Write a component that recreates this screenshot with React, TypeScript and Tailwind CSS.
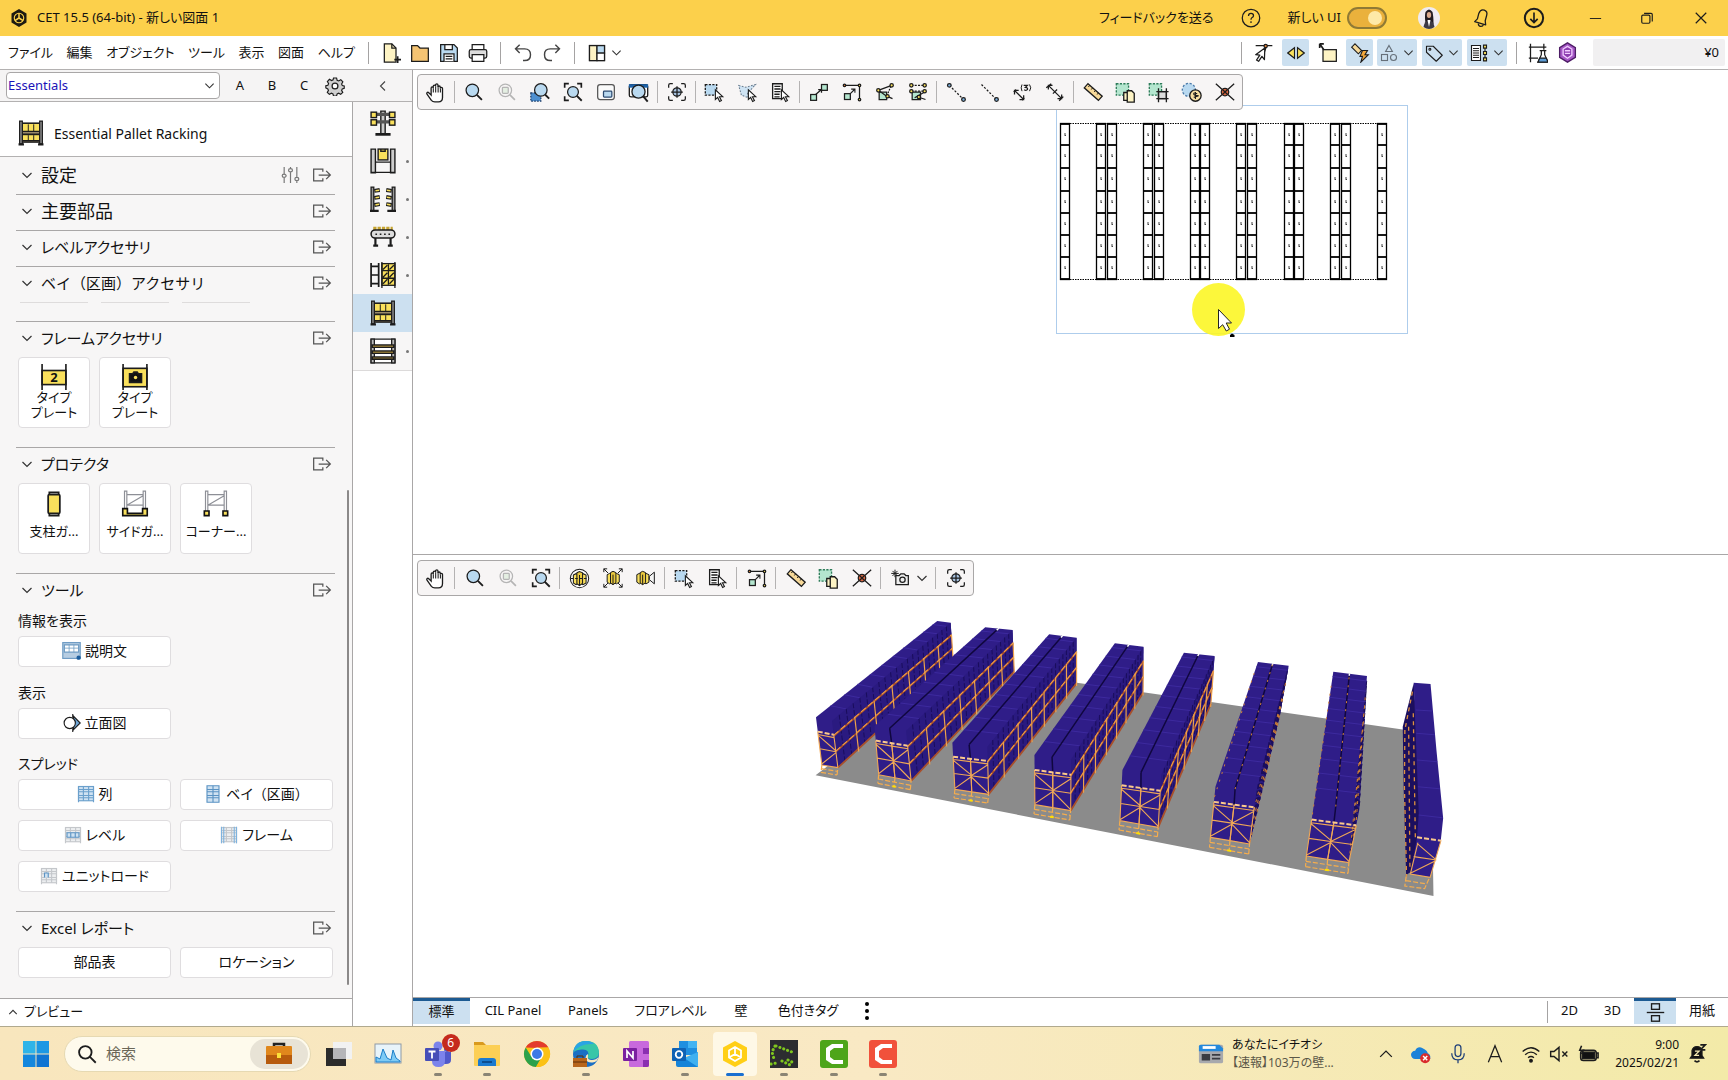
import React from "react";
import type { ReactNode } from "react";

type IconProps = { children: ReactNode; className?: string; sw?: number; color?: string };

function Ico({ children, className = "size-6", sw = 1.5, color = "#1c1c1c" }: IconProps) {
  return (
    <svg viewBox="0 0 24 24" className={`${className} shrink-0`} fill="none" stroke={color} strokeWidth={sw} aria-hidden="true">
      {children}
    </svg>
  );
}

const BLUE = "#b9d9f0";
const GREEN = "#b4e6cf";
const CREAM = "#fdf3c4";
const YELLOW = "#f9e05c";

/* ---------- small shared glyphs ---------- */

const Pointer = ({ x, y }: { x: number; y: number }) => (
  <path transform={`translate(${x} ${y})`} d="M0 0v11l2.600-2.400 2.300 4.600 2-1-2.300-4.400h3.800z" fill="#fff" strokeWidth={1.3} />
);

const Chevron = ({ className = "size-3" }: { className?: string }) => (
  <Ico className={className} sw={2.4} color="#333">
    <path d="M3 8l9 9 9-9" />
  </Ico>
);

/* ---------- top bars ---------- */

const CetLogo = () => (
  <svg viewBox="0 0 24 24" className="size-[18px]" aria-hidden="true">
    <path d="M12 0l10 6v12l-10 6L2 18V6z" fill="#1d1a12" />
    <circle cx="12" cy="12" r="6.3" fill="none" stroke="#fbd04a" strokeWidth="1.5" />
    <path d="M12 5.5V12l-5.5 3.5M12 12l5.500 3.500" stroke="#fbd04a" strokeWidth="2" fill="none" />
  </svg>
);

const Hand = () => (
  <Ico className="size-[21px]" sw={1.5}>
    <path d="M7 15L4.300 12.300c-1.300-1.300-3 .2-2 1.700l5 7c1 1.300 2 1.800 4 1.800h4c3 0 4.700-2 4.700-5V7.500c0-1.800-2.500-1.800-2.500 0V6c0-1.900-2.700-1.900-2.700 0V3.500c0-1.900-2.700-1.900-2.700 0V5c0-1.900-2.700-1.900-2.700 0v2c0-1.800-2.400-1.800-2.400 0z" fill="#fff" />
    <path d="M9.500 7v5M12.200 5v7M15 6v6M17.600 7.500V12" strokeWidth="1.200" />
  </Ico>
);
const Zoom = () => (
  <Ico className="size-5">
    <circle cx="10" cy="10" r="7.500" fill={BLUE} />
    <path d="M15.500 15.500l6 6" strokeWidth="2.200" />
  </Ico>
);
const ZoomOff = () => (
  <Ico className="size-5" color="#b5b5b5">
    <circle cx="10" cy="10" r="7.500" />
    <rect x="6.500" y="6.500" width="7" height="7" rx="1" fill="#e4efe2" />
    <path d="M15.500 15.500l6 6" strokeWidth="2" />
  </Ico>
);
const ZoomSel = () => (
  <Ico className="size-5">
    <rect x="1" y="13" width="12" height="10" fill="#4d8fd0" stroke="#1f3f6a" strokeDasharray="2 1.500" />
    <circle cx="13" cy="9.500" r="7.500" fill={BLUE} />
    <path d="M18 15l5 5" strokeWidth="2.200" />
  </Ico>
);
const ZoomFit = () => (
  <Ico className="size-5">
    <path d="M2 7V2h5M17 2h5v5M2 17v5h5" strokeWidth="2" />
    <circle cx="12" cy="12" r="6.500" fill={BLUE} />
    <path d="M16.500 16.500l6 6" strokeWidth="2.200" />
  </Ico>
);
const ZoomBox = () => (
  <Ico className="size-5" color="#555">
    <rect x="2" y="3" width="20" height="18" rx="3" fill="#fafafa" />
    <rect x="9" y="11" width="10" height="7" rx="1" fill={BLUE} stroke="#2b4a70" />
  </Ico>
);
const ZoomWin = () => (
  <Ico className="size-[21px]">
    <rect x="1.500" y="3" width="21" height="14" rx="2" fill="#fff" />
    <path d="M1 4.500h22" stroke="#1d62a8" strokeWidth="4" />
    <circle cx="12" cy="11" r="7.500" fill={BLUE} />
    <path d="M17.500 16.500l5 6" strokeWidth="2.200" />
  </Ico>
);
const Target = () => (
  <Ico className="size-5">
    <path d="M2 7V4q0-2 2-2h3M17 2h3q2 0 2 2v3M2 17v3q0 2 2 2h3M17 22h3q2 0 2-2v-3" />
    <circle cx="12" cy="12" r="5" fill="#a9c4e2" />
    <path d="M12 5v14M5 12h14" />
  </Ico>
);
const SelBox = () => (
  <Ico className="size-[21px]">
    <rect x="1.500" y="3" width="13" height="12" fill={BLUE} strokeDasharray="2.500 1.500" />
    <Pointer x={13} y={9} />
  </Ico>
);
const SelPoly = () => (
  <Ico className="size-[21px]">
    <path d="M2 4l8 2 11-3-9 10 1 5-8-3z" fill="#cfe4f4" stroke="#6a7d90" strokeDasharray="2 1.600" strokeWidth="1.200" />
    <Pointer x={13} y={9} />
  </Ico>
);
const SelList = () => (
  <Ico className="size-[21px]">
    <path d="M3 2h11v17H3z" fill="#fff" />
    <path d="M5 5h7M5 8h7M5 11h7M5 14h6M5 17h6" />
    <Pointer x={13} y={9} />
  </Ico>
);
const Link1 = () => (
  <Ico className="size-5">
    <rect x="2" y="15" width="7" height="7" fill={GREEN} />
    <rect x="15" y="3" width="7" height="7" fill={GREEN} />
    <path d="M8 15l7-6M11 9h4v4" />
  </Ico>
);
const Link2 = () => (
  <Ico className="size-5">
    <path d="M3 4h18v17" />
    <rect x="3" y="14" width="7" height="7" fill={GREEN} />
    <path d="M10 14l5-5M11 8.500h4.500V13" strokeWidth="1.300" />
    <circle cx="3" cy="4" r="1.500" fill="#e8853a" />
    <circle cx="21" cy="4" r="1.500" fill={YELLOW} />
    <circle cx="21" cy="21" r="1.500" fill={YELLOW} />
  </Ico>
);
const Snap1 = () => (
  <Ico className="size-5">
    <path d="M5 12h9v9H5z" fill={GREEN} />
    <path d="M4 10l16-6M4 10l10 7 7 3" />
    <path d="M19 5l-4 10" strokeDasharray="2 1.500" />
    <circle cx="4" cy="10" r="2" fill={YELLOW} />
    <circle cx="20" cy="4" r="2" fill={YELLOW} />
    <circle cx="15" cy="17" r="2" fill={YELLOW} />
  </Ico>
);
const Snap2 = () => (
  <Ico className="size-5">
    <path d="M5 12h10v9H5z" fill={GREEN} />
    <path d="M4 4h16M4 11h16" strokeDasharray="2.500 1.500" />
    <path d="M8 19L20 12M12 18l9 3" />
    {[[4, 4], [20, 4], [4, 11], [20, 11], [13, 18]].map(([x, y]) => (
      <circle key={`${x}-${y}`} cx={x} cy={y} r="2" fill={YELLOW} />
    ))}
  </Ico>
);
const Line2 = () => (
  <Ico className="size-5">
    <path d="M4 4l17 17" strokeDasharray="2.500 2" />
    <circle cx="4" cy="4" r="2.200" fill="#7fb0dd" />
    <circle cx="21" cy="21" r="2.200" fill="#7fb0dd" />
  </Ico>
);
const Line1 = () => (
  <Ico className="size-5">
    <path d="M3 3l18 18" strokeDasharray="2.500 2" />
    <circle cx="21" cy="21" r="2.200" fill="#7fb0dd" />
  </Ico>
);
const Dim3 = () => (
  <Ico className="size-5">
    <path d="M3 10l11 11M3 15v-5h5M14 16v5H9M2 12l3-3M12 22l3-3" />
    <path d="M12 3q-2 4 0 8M21 3q3 4 0 8" strokeWidth="1.200" />
    <path d="M14 4h4.500l-2.500 2.500q3.500.3 2.500 2.700-1.500 1.500-4 0" strokeWidth="1.500" />
  </Ico>
);
const Dim = () => (
  <Ico className="size-5">
    <path d="M4 4l16 16M4 9V4h5M20 15v5h-5M1.500 7l6-5M17 22.500l5-5M9.500 14l5-5" />
  </Ico>
);
const Ruler = () => (
  <Ico className="size-5">
    <path d="M6 2l17 15-4.500 5L1.500 7z" fill="#f7d999" />
    <path d="M8 4L6.500 6M11.500 7L10 9M15 10l-1.500 2M18.500 13L17 15" strokeWidth="1.200" />
  </Ico>
);
const CopySel = () => (
  <Ico className="size-[21px]">
    <rect x="1.500" y="2" width="14" height="13" fill={GREEN} stroke="#2f7d5b" strokeDasharray="2.500 1.500" />
    <path d="M10 12h6v9h-6z" fill={CREAM} />
    <path d="M14 10h5l3 3v10h-8z" fill={CREAM} />
  </Ico>
);
const FrameSel = () => (
  <Ico className="size-[21px]">
    <rect x="1.500" y="2" width="14" height="13" fill={GREEN} stroke="#2f7d5b" strokeDasharray="2.500 1.500" />
    <rect x="12" y="11" width="9" height="8" fill="#dcdcdc" />
    <path d="M12 7v16M21 7v16M9.500 11h14M9.500 19h14" />
  </Ico>
);
const Price = () => (
  <Ico className="size-[21px]">
    <circle cx="9" cy="9" r="7.500" fill={BLUE} stroke="#4a79a8" strokeDasharray="2.500 2" />
    <circle cx="16.500" cy="15.500" r="6.500" fill="#f7dfa2" />
    <path d="M18.500 13.500q-4-2-4 0t4 2-4 2M16.500 11.500v8" strokeWidth="1.200" />
  </Ico>
);
const Cross = () => (
  <Ico className="size-5">
    <path d="M1 2l22 20M23 2L1 22" />
    <circle cx="12" cy="12" r="4.500" fill="#d9663f" />
    <path d="M9 9l6 6M15 9l-6 6" />
  </Ico>
);
const Cubes = () => (
  <>
    <path d="M5 8l3-1.500L12 8v9l-4 2-3-2z" fill={YELLOW} />
    <path d="M12 8l4-1.500L19.500 8v9L16 19l-4-2z" fill={YELLOW} />
    <path d="M9 5.500l3-1.500 3.500 1.500v12L12 20l-3-2z" fill="#e9c93f" />
    <path d="M12 8v12" />
  </>
);
const Orbit = () => (
  <Ico className="size-[21px]" sw={1.200}>
    <circle cx="12" cy="12" r="10.500" fill="#fff" />
    <Cubes />
    <path d="M2 12h20" strokeDasharray="3 2" />
  </Ico>
);
const FitCube = () => (
  <Ico className="size-5" sw={1.200}>
    <Cubes />
    <path d="M1 5V1h4M1 1l5 5M19 1h4v4M23 1l-5 5M1 19v4h4M1 23l5-5M19 23h4v-4M23 23l-5-5" />
  </Ico>
);
const CamCube = () => (
  <Ico className="size-5" sw={1.200}>
    <g transform="translate(-4 0)">
      <Cubes />
    </g>
    <path d="M16 10l6-5v14l-6-5z" fill="#f4f4f4" />
  </Ico>
);
const Camera = () => (
  <Ico className="size-5">
    <path d="M7 9h4l2-2h4l2 2h3v11H7z" fill="#eee" />
    <circle cx="15" cy="14" r="3.200" />
    <path d="M6 2v9M1.500 6.500h9M3 3.500l6 6M9 3.500l-6 6" strokeWidth="1.200" />
  </Ico>
);

type Tool = { name: string; icon: ReactNode; menu?: boolean } | null;

const planTools: Tool[] = [
  { name: "Pan", icon: <Hand /> }, null,
  { name: "Zoom", icon: <Zoom /> }, { name: "Zoom actual", icon: <ZoomOff /> }, { name: "Zoom selection", icon: <ZoomSel /> },
  { name: "Zoom extents", icon: <ZoomFit /> }, { name: "Zoom page", icon: <ZoomBox /> }, { name: "Zoom window", icon: <ZoomWin /> }, null,
  { name: "Center", icon: <Target /> }, null,
  { name: "Select box", icon: <SelBox /> }, { name: "Select polygon", icon: <SelPoly /> }, { name: "Select list", icon: <SelList /> }, null,
  { name: "Connect", icon: <Link1 /> }, { name: "Connect corner", icon: <Link2 /> }, { name: "Snap angle", icon: <Snap1 /> }, { name: "Snap parallel", icon: <Snap2 /> }, null,
  { name: "Two point line", icon: <Line2 /> }, { name: "One point line", icon: <Line1 /> }, { name: "Repeat dimension", icon: <Dim3 /> }, { name: "Dimension", icon: <Dim /> }, null,
  { name: "Measure", icon: <Ruler /> }, { name: "Copy area", icon: <CopySel /> }, { name: "Frame area", icon: <FrameSel /> }, { name: "Price area", icon: <Price /> }, { name: "Explode", icon: <Cross /> },
];

const viewTools: Tool[] = [
  { name: "Pan 3D", icon: <Hand /> }, null,
  { name: "Zoom 3D", icon: <Zoom /> }, { name: "Zoom actual 3D", icon: <ZoomOff /> }, { name: "Zoom extents 3D", icon: <ZoomFit /> }, null,
  { name: "Orbit", icon: <Orbit /> }, { name: "Fit model", icon: <FitCube /> }, { name: "Camera view", icon: <CamCube /> }, null,
  { name: "Select box 3D", icon: <SelBox /> }, { name: "Select list 3D", icon: <SelList /> }, null,
  { name: "Connect corner 3D", icon: <Link2 /> }, null,
  { name: "Measure 3D", icon: <Ruler /> }, { name: "Copy area 3D", icon: <CopySel /> }, { name: "Explode 3D", icon: <Cross /> }, null,
  { name: "Snapshot", icon: <Camera />, menu: true }, null,
  { name: "Center 3D", icon: <Target /> },
];

function Toolbar({ tools, loose }: { tools: Tool[]; loose?: boolean }) {
  return (
    <div role="toolbar" className="relative z-10 flex h-9 w-fit items-center rounded-sm border border-[#a9a7a7] bg-[#f7f5f5] px-px">
      {tools.map((t, i) =>
        t ? (
          <button key={i} aria-label={t.name} className={`flex h-8 items-center justify-center ${t.menu ? "w-[49px] gap-[6px]" : "w-[33px]"}`}>
            {t.icon}
            {t.menu && <Chevron />}
          </button>
        ) : (
          <span key={i} className={`h-[22px] w-px bg-[#b4b2b2] ${loose ? "mr-[3px] ml-[2px]" : "mx-[2px]"}`} />
        ),
      )}
    </div>
  );
}

function Sep({ className = "" }: { className?: string }) {
  return <span className={`h-[22px] w-px shrink-0 bg-[#a5a3a3] ${className}`} />;
}

function TitleBar() {
  return (
    <header className="flex h-9 shrink-0 items-center bg-[#fcd04b] pl-[10px]">
      <CetLogo />
      <h1 className="ml-[9px] flex-1 text-[13px]">CET 15.5 (64-bit) - 新しい図面 1</h1>
      <button className="text-[13px]">フィードバックを送る</button>
      <button aria-label="Help" className="ml-7">
        <Ico className="size-5"><circle cx="12" cy="12" r="10.500" /><path d="M9 9.500q0-3 3-3t3 2.700q0 1.500-2 2.500-1 .6-1 2.300M12 16v2" /></Ico>
      </button>
      <label className="ml-[26px] flex items-center gap-[6px] text-[13px]">
        新しい UI
        <input type="checkbox" defaultChecked role="switch" className="peer sr-only" />
        <span className="flex h-[22px] w-10 items-center justify-end rounded-full border-2 border-[#8f7a35] bg-[#eab13c] px-[3px]">
          <span className="size-[14px] rounded-full bg-[#fee9a8]" />
        </span>
      </label>
      <button aria-label="Account" className="ml-[31px]">
        <svg viewBox="0 0 22 22" className="size-[22px]">
          <circle cx="11" cy="11" r="11" fill="#efebf2" />
          <path d="M7.500 17q-1-9 0-12Q11 0 14.500 5q1 4 1 12z" fill="#221b22" />
          <ellipse cx="11" cy="8" rx="2.200" ry="3" fill="#dba98e" />
          <path d="M5.500 20q1-6.500 5.500-6.500t5.500 6.500q-5.500 4-11 0z" fill="#3d3a46" />
          <path d="M9.500 13h3l-1.500 7z" fill="#fff" />
        </svg>
      </button>
      <button aria-label="Notifications" className="ml-[31px]">
        <Ico className="size-[22px]" sw={1.400}><path d="M4 16l3-3 1.500-6q2-5 6-3.500t2.500 6l-1.500 5.500.500 4.500z" strokeLinejoin="round" /><path d="M8 18q0 3 2.500 3.200t3-2" /></Ico>
      </button>
      <button aria-label="Updates" className="ml-[30px]">
        <Ico className="size-[22px]" sw={2.200}><circle cx="12" cy="12" r="10" /><path d="M12 6v11M8 13l4 4 4-4" strokeWidth="1.800" /></Ico>
      </button>
      <button aria-label="Minimize" className="ml-[24px] flex w-[52px] justify-center"><Ico className="size-[15px]"><path d="M3 12h18" /></Ico></button>
      <button aria-label="Restore" className="flex w-[52px] justify-center"><Ico className="size-[14px]" sw={2}><rect x="3" y="7" width="14" height="14" rx="2" /><path d="M7 4h12q2 0 2 2v12" /></Ico></button>
      <button aria-label="Close" className="flex w-[55px] justify-center"><Ico className="size-[14px]" sw={2}><path d="M3 3l18 18M21 3L3 21" /></Ico></button>
    </header>
  );
}

function MenuBar() {
  return (
    <div className="flex h-[34px] shrink-0 items-center border-b border-[#b3b1b1] bg-white pr-[3px]">
      <nav className="flex w-[368px] shrink-0 justify-between pr-[13px] pl-2 text-[13px] whitespace-nowrap">
        {["ファイル", "編集", "オブジェクト", "ツール", "表示", "図面", "ヘルプ"].map((m) => (
          <button key={m}>{m}</button>
        ))}
      </nav>
      <Sep />
      <div className="flex items-center gap-[9px] pl-3">
        <button aria-label="New"><Ico className="size-5"><path d="M4 1h9l5 5v17H4z" fill={CREAM} /><path d="M13 1v5h5" /><path d="M20 16v8M16 20h8" strokeWidth="2" /></Ico></button>
        <button aria-label="Open"><Ico className="size-5"><path d="M2 3h7l3 3h10v16H2z" fill="#f5c473" /></Ico></button>
        <button aria-label="Save"><Ico className="size-5"><path d="M2 2h16l4 4v16H2z" fill={BLUE} /><path d="M7 2h9v6H7zM6 22v-9h12v9" fill="#fff" /><path d="M8 16h8M8 19h8" /></Ico></button>
        <button aria-label="Print"><Ico className="size-5"><path d="M5 8V2h14v6" fill="#fff" /><rect x="1.500" y="8" width="21" height="10" rx="2" fill="#ddd" /><path d="M5 14h14v8H5z" fill="#fff" /></Ico></button>
      </div>
      <Sep className="ml-3" />
      <div className="flex items-center gap-[9px] pl-3">
        <button aria-label="Undo"><Ico className="size-5" sw={1.700} color="#444"><path d="M8 2L3 7l5 5M3 7h11q7 0 7 7t-7 7h-2" /></Ico></button>
        <button aria-label="Redo"><Ico className="size-5" sw={1.700} color="#444"><path d="M16 2l5 5-5 5M21 7H10q-7 0-7 7t7 7h2" /></Ico></button>
      </div>
      <Sep className="ml-3" />
      <button aria-label="Window layout" className="ml-3 flex items-center gap-1">
        <Ico className="size-5"><rect x="3" y="3" width="18" height="18" fill="#fff" /><path d="M3 3h9v18H3z" fill={CREAM} /><path d="M12 3h9v9h-9z" fill={BLUE} /><path d="M12 12h9v9h-9z" fill="#fff" /></Ico>
        <Chevron className="size-[11px]" />
      </button>
      <div className="ml-auto flex items-center">
        <Sep />
        <button aria-label="Snap pointer" className="ml-[10px] flex w-6 justify-center"><Ico className="size-5"><path d="M2 3h20M15 4l-3 8" /><circle cx="14" cy="3.500" r="2" fill="#e8853a" /><path d="M13 6L2 14l5 .5-4 6 2.500 1.500 4-6 3 4z" fill="#fff" strokeLinejoin="round" /></Ico></button>
        <button aria-label="Mirror" className="ml-[6px] flex h-[27px] w-[27px] items-center justify-center rounded-xs bg-[#cce0f0]"><Ico className="size-[18px]"><path d="M10 5v14L1 12zM14 5v14l9-7z" fill={YELLOW} /></Ico></button>
        <button aria-label="Move" className="flex w-[37px] justify-center"><Ico className="size-5"><rect x="6" y="8" width="16" height="14" fill={CREAM} /><path d="M2 1h5M2 1v5M2 1l5 7" strokeWidth="2" /></Ico></button>
        <button aria-label="Quick dimension" className="flex h-[27px] w-[27px] items-center justify-center rounded-xs bg-[#cce0f0]"><Ico className="size-5" sw={1.300}><path d="M6 1l8 8-4 4-8-8z" fill="#f7d999" /><path d="M15 9h6l-3 5h4l-9 9 2-7h-3z" fill="#f3a83c" /></Ico></button>
        <button aria-label="Shapes" className="ml-1 flex h-[27px] w-10 items-center justify-center gap-[5px] rounded-xs bg-[#cce0f0]"><Ico className="size-[18px]" color="#66707a"><path d="M12 2l4.500 8h-9z" /><rect x="2" y="14" width="8" height="8" /><circle cx="18" cy="18" r="4" /></Ico><Chevron className="size-[11px]" /></button>
        <button aria-label="Tags" className="ml-[5px] flex h-[27px] w-10 items-center justify-center gap-[5px] rounded-xs bg-[#cce0f0]"><Ico className="size-[18px]"><path d="M2 3h9l12 12-8 8L2 11z" strokeLinejoin="round" /><circle cx="6.500" cy="7" r="1.300" /></Ico><Chevron className="size-[11px]" /></button>
        <button aria-label="Properties" className="ml-[5px] flex h-[27px] w-10 items-center justify-center gap-[5px] rounded-xs bg-[#cce0f0]"><Ico className="size-[18px]"><path d="M2 2h12v20H2z" fill="#fff" /><path d="M4 6h8M4 9h8M4 12h8M4 15h8M4 18h8" /><path d="M20 3v18" /><path d="M18 1.500h4v4h-4zM18 10h4v4h-4zM18 18.500h4v4h-4z" fill={YELLOW} /></Ico><Chevron className="size-[11px]" /></button>
        <Sep className="ml-[9px]" />
        <button aria-label="Lab" className="ml-[11px]"><Ico className="size-5"><path d="M3 1v22M1 5h21M1 18h11M19 1v7" /><path d="M14 9h8M16 9v5l-4 9h12l-4-9V9" fill="#fff" /><path d="M14 18h8l2 5H12z" fill="#5b9bd5" /></Ico></button>
        <button aria-label="Extensions" className="ml-[9px]"><Ico className="size-[21px]"><path d="M12 1l9 5.500v11L12 23l-9-5.500v-11z" fill="#a557c5" stroke="#4d1c66" /><path d="M12 5l5 3v7l-5 3.500L7 15V8z" stroke="#f1ceff" fill="#8d3db0" /><path d="M9 10h6M9 13h6" stroke="#f1ceff" /></Ico></button>
        <output className="ml-[15px] flex h-[27px] w-[132px] items-center justify-end rounded-xs bg-[#f1f0f1] pr-[6px] text-[13px]">¥0</output>
      </div>
    </div>
  );
}

/* ---------- catalogue rail ---------- */

const PalletRack = ({ className = "size-[26px]" }: { className?: string }) => (
  <Ico className={className} sw={1.100}>
    <rect x="4" y="3" width="16" height="8" fill={YELLOW} />
    <rect x="4" y="13.500" width="16" height="6.500" fill={YELLOW} />
    <path d="M9.500 4v7M14.500 4v7M9.500 14v6M14.500 14v6" strokeWidth="0.900" />
    <path d="M4 3h16" />
    <path d="M4 10.500h16v2.500H4zM4 19h16v1.500H4z" fill="#9a8a6a" />
    <path d="M1.500 1H4v21H1.500zM20 1h2.500v21H20z" fill="#8a8a8a" />
    <path d="M.5 22.500h5M18.500 22.500h5" strokeWidth="2" />
  </Ico>
);

const railIcons: { name: string; dot?: boolean; active?: boolean; icon: ReactNode }[] = [
  { name: "Cantilever", icon: <Ico className="size-[26px]" sw={1.300}><path d="M10 1h4v21h-4z" fill="#ccc" /><path d="M3 4h18M3 11h18" strokeWidth="3" stroke="#555" />{[[1, 2], [18, 2], [1, 9], [18, 9]].map(([x, y]) => <rect key={`${x}${y}`} x={x} y={y} width="5" height="5" fill={YELLOW} />)}<path d="M5 22.500h14" strokeWidth="2.500" /></Ico> },
  { name: "Drive-in", dot: true, icon: <Ico className="size-[26px]" sw={1.300}><path d="M1 1h4v22H1zM19 1h4v22h-4z" fill="#ccc" /><rect x="7.500" y="1" width="9" height="10" fill={YELLOW} /><path d="M10 1v2h4V1M5 13h14M1 22.500h22" /></Ico> },
  { name: "Shelf arms", dot: true, icon: <Ico className="size-[26px]" sw={1.200}><path d="M1 1h2.500v22H1zM20.500 1H23v22h-2.500z" fill="#999" /><path d="M4 4.500l5-.8M4 11l5-.8M4 17.500l5-.8M20 4.500l-5-.8M20 11l-5-.8M20 17.500l-5-.8" strokeWidth="3.600" /><path d="M5 4.400l3.400-.5M5 10.900l3.400-.5M5 17.400l3.400-.5M19 4.400l-3.400-.5M19 10.900l-3.400-.5M19 17.400l-3.400-.5" stroke={YELLOW} strokeWidth="1.500" /><path d="M0 23h8M16 23h8" strokeWidth="2" /></Ico> },
  { name: "Conveyor", dot: true, icon: <Ico className="size-[26px]" sw={1.400}><path d="M3 4h18" stroke="#c7a531" strokeWidth="3" strokeDasharray="3 1" /><rect x="1" y="5.500" width="22" height="7.500" rx="3.700" fill="#ddd" /><path d="M5 9.500h15" strokeWidth="1.500" strokeDasharray="1.500 2.500" /><path d="M5 13v6M19 13v6M3 20h4.500M16.500 20H21" strokeWidth="2" /></Ico> },
  { name: "Shuttle", dot: true, icon: <Ico className="size-[26px]" sw={1.200}><path d="M1 1v22M8 1v22M1 4h7M1 12h7M1 20h7" strokeWidth="1.600" /><rect x="11" y="1.500" width="12" height="20" fill={YELLOW} /><path d="M11 0v24M17 2v19M23 0v24M11 8h12M11 15h12M12 7l4-4M18 7l4-4M12 14l4-4M18 14l4-4M12 20l4-4M18 20l4-4" /></Ico> },
  { name: "Pallet racking", active: true, icon: <PalletRack /> },
  { name: "Shelving", dot: true, icon: <Ico className="size-[26px]" sw={1.200}><path d="M1 1h22v22H1z" fill="#fff" /><path d="M1 1h3v22H1zM20 1h3v22h-3z" fill="#bbb" /><path d="M2 6.500h20v2H2zM2 12h20v2H2zM2 17.500h20v2H2z" fill="#f3c64b" strokeWidth="1.400" /></Ico> },
];

function Rail() {
  return (
    <div className="w-[60px] shrink-0 border-l border-[#a9a7a7] bg-white">
      <div className="border-b border-[#dcdada] bg-[#f7f6f6] pt-[2px]">
        {railIcons.map((r) => (
          <button key={r.name} aria-label={r.name} className={`relative flex h-[38px] w-full items-center justify-center ${r.active ? "bg-[#cce0f0]" : ""}`}>
            {r.icon}
            {r.dot && <span className="absolute top-[18px] right-[3px] size-[3px] rounded-full bg-[#777]" />}
          </button>
        ))}
      </div>
    </div>
  );
}

/* ---------- side panel ---------- */

const Export = () => (
  <Ico className="size-5" sw={1.500} color="#555">
    <path d="M13 8V5H2v14h11v-3M8 12h14M17 7l5 5-5 5" />
  </Ico>
);

const FullWidth = ({ children }: { children: ReactNode }) => <span className="[font-feature-settings:normal]">{children}</span>;

function Section({ title, label, extra, big, first, children }: { title: string; label?: ReactNode; extra?: ReactNode; big?: boolean; first?: boolean; children?: ReactNode }) {
  return (
    <section className={first ? "" : "border-t border-[#a9a7a7]"}>
      <div className="flex h-[35px] items-center pr-[3px] pb-[3px] pl-[5px]">
        <button className="flex flex-1 items-center gap-2">
          <Chevron />
          <h2 className={`leading-6 ${big ? "text-[18px]" : "text-[15px]"}`}>{label ?? title}</h2>
        </button>
        {extra}
        <button aria-label={`${title} を開く`}><Export /></button>
      </div>
      {children}
    </section>
  );
}

function Card({ icon, label }: { icon: ReactNode; label: ReactNode }) {
  return (
    <button className="flex h-[71px] w-[72px] flex-col items-center rounded-sm border border-[#dfdddf] bg-white pt-[6px] text-[13px] leading-[15px]">
      {icon}
      {label}
    </button>
  );
}

function Wide({ icon, label }: { icon?: ReactNode; label: ReactNode }) {
  return (
    <button className="flex h-[31px] w-[153px] items-center justify-center gap-1 rounded-sm border border-[#dfdddf] bg-white pb-[2px] text-[14px]">
      {icon}
      <span>{label}</span>
    </button>
  );
}

const GroupLabel = ({ children }: { children: ReactNode }) => (
  <h3 className="flex h-[27px] items-center pb-1 text-[14px]">{children}</h3>
);

function MiniRack({ faded, mark }: { faded?: boolean; mark?: ReactNode }) {
  const c = faded ? "#c4c7cb" : "#6ba0cc";
  return (
    <Ico className="size-[18px]" sw={1.500} color={c}>
      <rect x="2" y="2" width="20" height="19" fill={faded ? "#eceef0" : "#cfe2f2"} />
      <path d="M2 2v21M22 2v21M8.500 2v19M15.500 2v19M2 6h20M2 9h20M2 14h20M2 17h20" />
      {mark}
    </Ico>
  );
}

const Truss = ({ guard }: { guard: boolean }) => (
  <Ico className="size-7" sw={1}>
    <path d="M3 1h2v18H3zM19 1h2v18h-2zM5 4h14M5 13h14M5 13L19 5" stroke="#8d8f96" />
    {guard ? (
      <path d="M1.500 16h4v4h13v-4h4v6h-21z" fill={YELLOW} stroke="#111" strokeWidth="1.400" />
    ) : (
      <path d="M2 18h4v4H2zM18 18h4v4h-4z" fill={YELLOW} stroke="#111" strokeWidth="1.400" />
    )}
  </Ico>
);

function Panel() {
  return (
    <div className="flex min-w-0 flex-1 flex-col">
      <div className="flex h-[55px] shrink-0 items-center gap-[10px] border-b border-[#b3b1b1] bg-white pt-2 pl-[18px]">
        <PalletRack />
        <h2 className="text-[14px]">Essential Pallet Racking</h2>
      </div>
      <div className="flex min-h-0 flex-1 overflow-hidden border-b border-[#a9a7a7] bg-[#f7f6f6]">
        <div className="w-[335px] pl-4">
          <div className="pt-[2px]">
            <Section title="設定" big first extra={<button aria-label="設定を調整" className="mr-3"><Ico className="h-5 w-[19px]" color="#777"><path d="M4 2v9M4 15v7M12 2v2M12 8v14M20 2v13M20 19v3M17.500 17a2.500 2 0 1 0 5 0 2.500 2 0 1 0-5 0M1.500 13a2.500 2 0 1 0 5 0 2.500 2 0 1 0-5 0M9.500 6a2.500 2 0 1 0 5 0 2.500 2 0 1 0-5 0" /></Ico></button>} />
          </div>
          <Section title="主要部品" big />
          <Section title="レベルアクセサリ" />
          <Section title="ベイ（区画）アクセサリ" label={<FullWidth>ベイ（区画）アクセサリ</FullWidth>}>
            <div className="flex h-[19px] gap-[13px] pl-1">
              {[0, 1, 2].map((i) => <span key={i} className="h-px w-[68px] bg-[#dedcdc]" />)}
            </div>
          </Section>
          <Section title="フレームアクセサリ">
            <div className="flex gap-[9px] pb-[19px] pl-[2px]">
              <Card label={<span>タイプ<br />プレート</span>} icon={<Ico className="size-[26px]"><rect x="1" y="6" width="22" height="13" fill={YELLOW} /><path d="M1 0v24M23 0v24" /><text x="12" y="17" textAnchor="middle" fontSize="12" fontWeight="700" fill="#111" stroke="none">2</text></Ico>} />
              <Card label={<span>タイプ<br />プレート</span>} icon={<Ico className="size-[26px]"><rect x="1" y="4" width="22" height="17" fill={YELLOW} /><path d="M1 0v24M23 0v24" /><path d="M7 9h3l1-1.500h3L15 9h3v8H7z" fill="#111" /><circle cx="12.500" cy="12.500" r="1.600" fill={YELLOW} stroke="none" /></Ico>} />
            </div>
          </Section>
          <Section title="プロテクタ">
            <div className="flex gap-[9px] pb-[19px] pl-[2px]">
              <Card label="支柱ガ..." icon={<Ico className="mb-[6px] size-7"><path d="M8 2h8v20H8z" fill="#ccc" /><rect x="7" y="4" width="10" height="16" rx="1" fill={YELLOW} /></Ico>} />
              <Card label="サイドガ..." icon={<span className="mb-[6px]"><Truss guard /></span>} />
              <Card label="コーナー..." icon={<span className="mb-[6px]"><Truss guard={false} /></span>} />
            </div>
          </Section>
          <Section title="ツール">
            <div className="pb-[19px] pl-[2px]">
              <GroupLabel>情報を表示</GroupLabel>
              <Wide label="説明文" icon={<Ico className="size-[19px]" color="#6f9cc4"><rect x="1" y="2" width="22" height="20" fill="#b6cde2" /><path d="M3 5h18v9H3z" fill="#fff" /><path d="M9 5v9M15 5v9M3 9h18" strokeWidth="1" /><circle cx="21" cy="21" r="2" fill="#1b5c9c" stroke="#1b5c9c" /></Ico>} />
              <div className="h-[14px]" />
              <GroupLabel>表示</GroupLabel>
              <Wide label="立面図" icon={<Ico className="size-[18px]"><path d="M14 3l9 9-9 9z" fill="#6ea5d6" /><circle cx="9" cy="12" r="7.500" fill="#fff" /><path d="M13 0v5M13 19v5" /></Ico>} />
              <div className="h-[13px]" />
              <GroupLabel>スプレッド</GroupLabel>
              <div className="grid grid-cols-[153px_153px] gap-x-[9px] gap-y-[10px]">
                <Wide label="列" icon={<MiniRack />} />
                <Wide label={<>ベイ<FullWidth>（区画）</FullWidth></>} icon={<Ico className="size-[18px]" color="#5b93c3"><path d="M4 1h16v22H4z" fill="#cfe2f2" /><path d="M12 1v22M4 6h16M4 9h16M4 14h16M4 17h16" /></Ico>} />
                <Wide label="レベル" icon={<MiniRack faded mark={<path d="M4 9h16v6H4zM9 9v6M15 9v6" stroke="#5b93c3" fill="#cfe2f2" />} />} />
                <Wide label="フレーム" icon={<MiniRack faded mark={<path d="M2 1v22M5 1v22M19 1v22M22 1v22" stroke="#7fb3de" />} />} />
                <Wide label="ユニットロード" icon={<MiniRack faded mark={<path d="M6 14V8h5v6" stroke="#5b93c3" fill="#cfe2f2" />} />} />
              </div>
            </div>
          </Section>
          <Section title="Excel レポート">
            <div className="flex gap-[9px] pl-[2px]">
              <Wide label="部品表" />
              <Wide label="ロケーション" />
            </div>
          </Section>
        </div>
        <div className="flex flex-1 flex-col items-center pt-[333px] pb-[13px] pl-2">
          <span className="w-[2px] flex-1 rounded bg-[#8b8989]" />
        </div>
      </div>
      <button className="flex h-[27px] shrink-0 items-center gap-[6px] bg-white pb-[2px] pl-2 text-[13px]">
        <Ico className="size-[10px]" sw={2.600} color="#333"><path d="M3 17l9-9 9 9" /></Ico>
        プレビュー
      </button>
    </div>
  );
}

function Sidebar() {
  return (
    <aside className="flex w-[413px] shrink-0 flex-col border-r border-[#a9a7a7]">
      <div className="flex h-8 shrink-0 items-center border-b border-[#b3b1b1] bg-[#f5f4f4] pl-[6px] text-[13px]">
        <div className="relative">
          <select aria-label="Catalogue" className="h-[27px] w-[214px] appearance-none rounded-sm border border-[#a9a7a7] bg-white px-px text-[13px] text-[#1a12b8]">
            <option>Essentials</option>
          </select>
          <span className="pointer-events-none absolute top-2 right-[5px]"><Chevron className="size-[11px]" /></span>
        </div>
        <div className="flex pl-1">
          {["A", "B", "C"].map((l) => <button key={l} className="w-8">{l}</button>)}
          <button aria-label="Catalogue settings" className="flex w-[30px] justify-center">
            <Ico className="size-5"><path d="M10 2h4l.7 3 2 .9 2.800-1.600 2.700 2.800-1.600 2.700.9 2.200 2.500.5v3l-2.600.8-.8 1.900 1.500 2.600-2.700 2.600-2.700-1.500-2 .9-.7 2.700h-4l-.7-2.700-2-.9-2.700 1.500-2.700-2.600 1.500-2.600-.8-1.900L0 15v-3l2.700-.5.9-2.200L2 6.600l2.700-2.800 2.800 1.600 2-.9z" transform="translate(1 .5) scale(.92)" fill="#cfcfcf" /><circle cx="12" cy="12" r="3.500" fill="#fff" /></Ico>
          </button>
        </div>
        <button aria-label="Collapse" className="ml-auto pr-[23px]"><Ico className="size-3" sw={2.200} color="#444"><path d="M16 3l-9 9 9 9" /></Ico></button>
      </div>
      <div className="flex min-h-0 flex-1">
        <Panel />
        <Rail />
      </div>
    </aside>
  );
}

/* ---------- floor plan ---------- */

const rowEdges = [19, 40, 63, 86, 108, 130, 152, 174];
const rackColumns = [4, 40, 51, 87, 98, 134, 144, 180, 191, 228, 238, 274, 285, 321];

function FloorPlan() {
  return (
    <svg viewBox="0 0 353 236" className="absolute top-[34px] left-[643px] h-[236px] w-[353px]" aria-label="Floor plan">
      <rect x="0.500" y="1.500" width="351" height="228" fill="none" stroke="#5c9bd8" strokeDasharray="1 1" />
      <path d="M4 19.500h326M4 175.500h326" stroke="#000" strokeDasharray="1.500 1" />
      {rackColumns.map((x) => (
        <g key={x}>
          <rect x={x + 0.5} y={19.5} width={9} height={156} fill="#fff" stroke="#000" strokeWidth="1.300" />
          {rowEdges.map((y) => (
            <g key={y}>
              <path d={`M${x} ${y + 1}h10`} stroke="#000" strokeWidth="1.800" />
              {y < 174 && <path d={`M${x + 4} ${y + 11}h2M${x + 4.5} ${y + 12.5}h1.500`} stroke="#444" strokeWidth="1.200" />}
            </g>
          ))}
        </g>
      ))}
      <circle cx="162.500" cy="205.500" r="26.500" fill="#fcf626" fillOpacity="0.900" />
      <path d="M162.500 205.500v19l4.200-3.800 3.600 6.300 3.200-1.800-3.300-6.200h5.300z" fill="#fff" stroke="#222" />
      <path d="M174 233v-2l2-1.500 2.500 1.500v2z" fill="#000" />
    </svg>
  );
}

/* ---------- perspective view ---------- */

type P = [number, number];
type Rack = { a: P; b: P; c: P; d: P; e: P; g: P; f: P; leg: number; pair: boolean };

const mix = (p: P, q: P, t: number): P => [p[0] + (q[0] - p[0]) * t, p[1] + (q[1] - p[1]) * t];
const depth = (u: number) => (u * 1.3) / (1 + 0.3 * u);
const pts = (...l: P[]) => l.map((p) => p.map((n) => n.toFixed(1)).join(",")).join(" ");
const seg = (p: P, q: P) => `M${p[0].toFixed(1)} ${p[1].toFixed(1)}L${q[0].toFixed(1)} ${q[1].toFixed(1)}`;

/* a/b: front top left/right, c/d: back top left/right, g/e: front bottom left/right, f: back bottom right */
const racks: Rack[] = [
  { a: [38, 352], b: [76, 362], c: [326, 63], d: [358, 68], g: [52, 495], e: [90, 503], f: [364, 186], leg: 22, pair: false },
  { a: [177, 378], b: [252, 392], c: [440, 82], d: [505, 90], g: [187, 524], e: [264, 543], f: [509, 215], leg: 26, pair: true },
  { a: [362, 428], b: [445, 440], c: [592, 103], d: [657, 113], g: [368, 568], e: [448, 583], f: [657, 250], leg: 26, pair: true },
  { a: [557, 465], b: [644, 478], c: [748, 130], d: [816, 140], g: [558, 614], e: [643, 632], f: [815, 278], leg: 28, pair: true },
  { a: [766, 510], b: [858, 525], c: [912, 158], d: [985, 168], g: [760, 662], e: [851, 682], f: [976, 312], leg: 28, pair: true },
  { a: [987, 560], b: [1084, 575], c: [1088, 186], d: [1161, 197], g: [975, 712], e: [1068, 732], f: [1140, 345], leg: 30, pair: true },
  { a: [1221, 612], b: [1329, 628], c: [1267, 215], d: [1347, 228], g: [1203, 768], e: [1304, 788], f: [1337, 375], leg: 32, pair: true },
];

const NS = { vectorEffect: "non-scaling-stroke" } as const;

function RackShape({ r, flat }: { r: Rack; flat: boolean }) {
  const steps = [1, 2, 3, 4, 5, 6, 7].map((i) => depth(i / 7));
  const half = Array.from({ length: 20 }, (_, i) => depth((i + 1) / 21));
  const lv = (t: number, u: number) => mix(mix(r.b, r.e, t), mix(r.d, r.f, t), u);
  const fr = (s: number, t: number) => mix(mix(r.a, r.b, s), mix(r.g, r.e, s), t);
  const legL: P = [r.g[0] - 2, r.g[1] + r.leg];
  const legR: P = [r.e[0] - 2, r.e[1] + r.leg];
  const seamFront = mix(r.a, r.b, 0.48);
  const seamBack = mix(r.c, r.d, 0.48);
  const cells = r.pair ? [[0, 0.5], [0.5, 1]] : [[0, 1]];
  return (
    <g>
      <polygon points={pts(r.a, r.c, r.d, r.f, r.e, r.g)} fill="#2f1d88" />
      <polygon points={pts(r.b, r.d, r.f, r.e)} fill="#2a1a80" />
      <path d={half.map((u) => seg(lv(0, u), lv(1, u))).join("")} stroke="#1a0d5c" strokeWidth="1" strokeDasharray="5 2" {...NS} />
      <path d={half.filter((_, i) => i % 2).map((u) => seg(mix(r.a, r.c, u), mix(r.b, r.d, u))).join("")} stroke="#3d2a9e" strokeWidth="1" {...NS} />
      {r.pair && (
        <>
          <path d={seg(seamFront, seamBack) + seg(seamFront, fr(0.5, 0.3))} stroke="#10073f" strokeWidth="1.500" {...NS} />
          <path d={seg(mix(seamFront, seamBack, 0.985), mix(seamFront, seamBack, 1.004))} stroke="#fff" strokeWidth="1.500" {...NS} />
        </>
      )}
      {flat && <path d={seg(seamFront, seamBack) + seg(mix(r.a, r.g, 0.2), mix(r.c, r.a, 0.08))} stroke="#d0803a" strokeWidth="1" strokeDasharray="2 6" {...NS} />}
      {!flat && <path d={[0.32, 0.66, 1].map((t) => seg(lv(t, 0), lv(t, 1))).join("")} stroke="#a9502b" strokeWidth="1.800" {...NS} />}
      {!flat && <path d={[0.31, 0.65].map((t) => seg(lv(t, 0), lv(t, 1))).join("")} stroke="#f0a04a" strokeWidth="1" strokeDasharray="6 3" {...NS} />}
      {!flat && <path d={steps.map((u) => seg(lv(0.3, u), lv(1.06, u))).join("")} stroke="#eda24e" strokeWidth="1.200" {...NS} />}
      {flat && <path d={[0.35, 0.66, 0.98].map((t) => seg(lv(t, 0), lv(t, 1))).join("")} stroke="#d08035" strokeWidth="1" strokeDasharray="3 5" {...NS} />}
      {cells.map(([s0, s1]) => (
        <path
          key={s0}
          d={
            seg(fr(s0, 0.3), fr(s0, 1)) + seg(fr(s1, 0.3), fr(s1, 1)) +
            seg(fr(s0, 0.36), fr(s1, 0.36)) + seg(fr(s0, 0.66), fr(s1, 0.66)) + seg(fr(s0, 1), fr(s1, 1)) +
            (s0 ? seg(fr(s0, 0.66), fr(s1, 0.38)) + seg(fr(s0, 0.68), fr(s1, 0.98)) : seg(fr(s0, 0.38), fr(s1, 0.64)) + seg(fr(s0, 0.98), fr(s1, 0.68)))
          }
          stroke="#f0a856" strokeWidth="1.100" {...NS}
        />
      ))}
      <path d={seg(fr(0, 0.3), fr(1, 0.3))} stroke="#fbc98b" strokeWidth="2" strokeDasharray="5 2" {...NS} />
      <path d={seg(r.g, legL) + seg(legL, legR) + seg(legR, r.e) + seg(mix(r.g, legL, 0.5), mix(r.e, legR, 0.5)) + (r.pair ? seg(fr(0.5, 1), mix(legL, legR, 0.5)) : "")} stroke="#f5ad4e" strokeWidth="1.200" strokeDasharray="5 2" {...NS} />
      {r.pair && <path d={seg(mix(legL, legR, 0.45), mix(legL, legR, 0.55))} stroke="#ffe100" strokeWidth="2" {...NS} />}
    </g>
  );
}

function Perspective() {
  return (
    <svg viewBox="0 0 1568 930" preserveAspectRatio="none" className="absolute top-[45px] left-[387px] h-[310px] w-[660px]" fill="none" aria-label="3D view">
      <polygon points="37,526 100,465 380,197 658,248 1440,390 1500,500 1505,888" fill="#8b8b8b" />
      {racks.map((r, i) => <RackShape key={i} r={r} flat={i > 4} />)}
      <polygon points="1458,250 1432,380 1434,560 1440,825 1470,800 1478,600" fill="#1c0f5e" />
      <path d="M1455 275L1437 390M1437 390L1436 560L1441 830M1446 380L1449 800M1457 340L1462 720" stroke="#e0913f" strokeWidth="1.300" strokeDasharray="4 4" {...NS} />
      <polygon points="1458,248 1498,252 1512,450 1528,655 1522,725 1497,832 1450,822 1466,712 1470,640" fill="#2f1d88" />
      <path d="M1463 330l39 3M1464 400l44 4M1466 480l48 5M1468 560l52 6M1470 645l57 8" stroke="#3d2a9e" strokeWidth="1" {...NS} />
      <path d="M1466 712L1524 722" stroke="#fbc98b" strokeWidth="2" strokeDasharray="5 2" {...NS} />
      <path d="M1468 728L1450 822L1497 832L1522 725M1458 770L1512 780M1466 730L1510 778M1450 820L1510 782" stroke="#f0a856" strokeWidth="1.100" {...NS} />
      <path d="M1440 830L1437 858L1484 866L1495 834M1440 842L1490 852" stroke="#f5ad4e" strokeWidth="1.200" strokeDasharray="5 2" {...NS} />
    </svg>
  );
}

function Workspace() {
  return (
    <main className="flex min-w-0 flex-1 flex-col bg-white">
      <section className="relative h-[485px] shrink-0 overflow-hidden border-b border-[#a9a7a7] pt-1 pl-1">
        <Toolbar tools={planTools} />
        <FloorPlan />
      </section>
      <section className="relative min-h-0 flex-1 overflow-hidden pt-[5px] pl-1">
        <Toolbar tools={viewTools} loose />
        <Perspective />
      </section>
      <div className="flex h-[29px] shrink-0 items-start border-t border-[#a9a7a7] text-[13px]">
        <button className="h-[26px] w-[57px] border-t-[3px] border-[#1c5a92] bg-[#cce0f0] pb-[2px]">標準</button>
        <button className="h-[26px] w-[86px]">CIL Panel</button>
        <button className="h-[26px] w-[64px]">Panels</button>
        <button className="h-[26px] w-[101px]">フロアレベル</button>
        <button className="h-[26px] w-[40px]">壁</button>
        <button className="h-[26px] w-[94px]">色付きタグ</button>
        <button aria-label="More tabs" className="flex h-[26px] w-6 items-center justify-center">
          <svg viewBox="0 0 4 18" className="h-[18px] w-1"><circle cx="2" cy="2" r="2" /><circle cx="2" cy="9" r="2" /><circle cx="2" cy="16" r="2" /></svg>
        </button>
        <div className="ml-auto flex items-start">
          <Sep className="mt-[3px]" />
          <button className="h-[26px] w-[43px]">2D</button>
          <button className="h-[26px] w-[43px]">3D</button>
          <button aria-label="Split view" className="flex h-[26px] w-[42px] items-center justify-center border-t-[3px] border-[#1c5a92] bg-[#cce0f0]">
            <Ico className="size-[19px]" sw={1.700}><rect x="7" y="1" width="10" height="7" /><path d="M1 12h22" /><rect x="7" y="16" width="10" height="7" /></Ico>
          </button>
          <button className="h-[26px] w-[52px]">用紙</button>
        </div>
      </div>
    </main>
  );
}

/* ---------- taskbar ---------- */

const taskApps: { name: string; run?: boolean; active?: boolean; icon: ReactNode }[] = [
  { name: "Task view", icon: <svg viewBox="0 0 28 28" className="size-7"><rect x="1" y="8" width="20" height="18" fill="#2b2b2b" /><rect x="8" y="2" width="19" height="17" fill="#f2f2f2" /><rect x="8" y="8" width="13" height="11" fill="#b5b5b8" /></svg> },
  { name: "Monitor", icon: <svg viewBox="0 0 28 24" className="h-6 w-7"><rect x="1" y="2" width="26" height="19" fill="#e8f4fa" stroke="#8e9aa5" /><path d="M2 20v-5l4 2 3-10 4 9 4 2 2-10 3 8 4 3v1z" fill="#7ecbf5" stroke="#1c7fc9" /></svg> },
  { name: "Teams", run: true, icon: <span className="relative"><svg viewBox="0 0 28 28" className="size-7"><circle cx="14" cy="6" r="4.500" fill="#7b83eb" /><circle cx="23" cy="9" r="3" fill="#5059c9" /><path d="M18 12h9v8q0 4-5 4h-4z" fill="#5059c9" /><path d="M8 11h13v10q0 6-6.500 6T8 21z" fill="#7b83eb" /><rect x="1" y="8" width="14" height="13" rx="1" fill="#464eb8" /><path d="M4.500 11.500h7M8 11.500v7" stroke="#fff" strokeWidth="1.800" /></svg><span className="absolute -top-[6px] -right-2 flex size-[18px] items-center justify-center rounded-full bg-[#c52a1c] text-[12px] text-white">6</span></span> },
  { name: "Explorer", run: true, icon: <svg viewBox="0 0 28 28" className="size-7"><path d="M1 2h9l3 3h-12z" fill="#d99a1e" /><path d="M1 5h26v20q0 1-1 1H2q-1 0-1-1z" fill="#fccf55" /><path d="M5 26v-5q0-3 3-3h12q3 0 3 3v5z" fill="#1b7ad0" /><path d="M9 22h10" stroke="#0c4d90" strokeWidth="2" /></svg> },
  { name: "Chrome", icon: <svg viewBox="0 0 28 28" className="size-7"><circle cx="14" cy="14" r="13" fill="#fbc116" /><path d="M2.700 7.500a13 13 0 0 1 22.600 0L14 8z" fill="#e33b2e" /><path d="M2.700 7.500A13 13 0 0 0 13 27l6-10.500L14 14 8 16z" fill="#2ca14c" /><path d="M14 7.500h11.300A13 13 0 0 1 13 27l6-10z" fill="#fbc116" /><circle cx="14" cy="14" r="6.500" fill="#fff" /><circle cx="14" cy="14" r="5" fill="#3c79e6" /></svg> },
  { name: "Edge", run: true, icon: <svg viewBox="0 0 28 28" className="size-7"><circle cx="14" cy="14" r="13" fill="#1b6fc4" /><path d="M1.500 12Q3 1 14 1q12 0 13 11 0 7-7 7-5 0-4-3 2-6-5-6.500Q5 9 1.500 12z" fill="#38c6a8" /><path d="M1.500 12Q3 1 14 1q5 0 8 3Q8 3 1.500 12z" fill="#2aa4e4" /><path d="M16 16q-1 4 4 4 4 0 6.500-3-1 5-6 5.500-6 .5-7-4.500 0-3 2.500-4z" fill="#f8e9c0" /><rect x="1" y="18" width="14" height="9" fill="#b8651b" /><path d="M1 22h14M5 18v-2h6v2" stroke="#5d2f08" fill="none" /></svg> },
  { name: "OneNote", icon: <svg viewBox="0 0 28 28" className="size-7"><rect x="7" y="1" width="20" height="26" rx="1.500" fill="#c869dd" /><path d="M21 8h6v6h-6zM21 20h6v5q0 2-2 2h-4z" fill="#8b2fb0" /><rect x="1" y="8" width="14" height="13" rx="1" fill="#7a1fa0" /><path d="M5 18v-7l6 7v-7" stroke="#fff" strokeWidth="1.700" fill="none" /></svg> },
  { name: "Outlook", run: true, icon: <svg viewBox="0 0 28 28" className="size-7"><rect x="8" y="1" width="18" height="14" fill="#1f8fe0" /><path d="M17 1h9v7h-9z" fill="#42b3f2" /><path d="M5 12l11 7 11-7v15H7q-2 0-2-2z" fill="#1583d8" /><path d="M27 12v15L13 18z" fill="#3fb0f0" /><rect x="1" y="8" width="14" height="13" rx="1" fill="#0f62b4" /><circle cx="8" cy="14.500" r="3.300" stroke="#fff" strokeWidth="1.800" fill="none" /></svg> },
  { name: "CET", active: true, icon: <svg viewBox="0 0 28 28" className="size-[28px]"><path d="M14 1l12 6.500v13L14 27 2 20.500v-13z" fill="#ffcf17" /><path d="M14 7l6 3.500v7L14 21l-6-3.500v-7zM14 7v7l-6 3.500M14 14l6 3.500" fill="none" stroke="#fff" strokeWidth="1.800" /></svg> },
  { name: "Command", run: true, icon: <svg viewBox="0 0 28 28" className="size-7"><rect width="28" height="28" fill="#2c2c30" /><path d="M6 6l16 6M5 6L2 12l2 7M1 24l6-1M12 21l10 5M18 20l4 2" stroke="#7fc71e" strokeWidth="3" strokeLinecap="round" strokeDasharray="0.100 4" fill="none" /></svg> },
  { name: "Camtasia", run: true, icon: <svg viewBox="0 0 28 28" className="size-7"><rect width="28" height="28" rx="3" fill="#4ea51a" /><path d="M23 4H12L6 8v12l6 4h11v-4h-9l-4-3v-6l4-3h9z" fill="#fff" /></svg> },
  { name: "Recorder", run: true, icon: <svg viewBox="0 0 28 28" className="size-7"><rect width="28" height="28" rx="3" fill="#f1513b" /><path d="M23 4H12L6 8v12l6 4h11v-4h-9l-4-3v-6l4-3h9z" fill="#fff" /></svg> },
];

function Taskbar() {
  return (
    <footer className="flex h-[53px] shrink-0 items-center bg-linear-to-r from-[#f8e6bd] via-[#f9e9c4] to-[#f3eaa8] pl-[22px]">
      <button aria-label="Start">
        <svg viewBox="0 0 28 28" className="size-7"><path d="M1 1h12.500v12.500H1z" fill="#2fb4e8" /><path d="M14.500 1H27v12.500H14.500z" fill="#1c98e4" /><path d="M1 14.500h12.500V27H1z" fill="#1487dd" /><path d="M14.500 14.500H27V27H14.500z" fill="#0f74d2" /></svg>
      </button>
      <div className="ml-[14px] flex h-9 w-[247px] items-center rounded-full border border-[#e6d9b2] bg-[#fefaec] pl-3">
        <Ico className="size-5" sw={2.200}><circle cx="10" cy="10" r="7.500" /><path d="M15.500 15.500l7 7" /></Ico>
        <input aria-label="検索" placeholder="検索" className="ml-[9px] w-0 flex-1 bg-transparent text-[15px] placeholder:text-[#6a6657]" />
        <span className="mr-[2px] flex h-[30px] w-[58px] items-center justify-center rounded-full bg-[#e8e3d6]">
          <svg viewBox="0 0 28 24" className="h-6 w-7"><path d="M9 5V2h10v3" fill="none" stroke="#222" strokeWidth="2.500" /><rect x="1" y="4" width="26" height="18" rx="1" fill="#e0871c" /><path d="M1 13h26v9H1z" fill="#b75b0d" /><rect x="12" y="11" width="4" height="5" fill="#fbe039" /></svg>
        </span>
      </div>
      <div className="ml-[3px] grid h-full w-[594px] grid-cols-12 items-center justify-items-center">
        {taskApps.map((a) => (
          <button key={a.name} aria-label={a.name} className={`relative flex h-11 w-11 items-center justify-center rounded-sm ${a.active ? "bg-[#fef8e6]" : ""}`}>
            {a.icon}
            {a.run && <span className="absolute bottom-0 left-[18px] h-[3px] w-2 rounded-full bg-[#8a8474]" />}
            {a.active && <span className="absolute bottom-0 left-[13px] h-[3px] w-[18px] rounded-full bg-[#1a6fd0]" />}
          </button>
        ))}
      </div>
      <div className="ml-auto flex items-center">
        <button className="flex items-center gap-2 text-left">
          <svg viewBox="0 0 28 24" className="h-6 w-[26px]"><rect x="1" y="2" width="26" height="20" rx="2" fill="#a7a9ad" /><path d="M1 9V4q0-2 2-2h20l4 4v3z" fill="#2489dc" /><path d="M5 5h14" stroke="#fff" strokeWidth="3" /><rect x="4" y="12" width="9" height="7" fill="#3a3c42" /><path d="M15 13h9M15 17h9" stroke="#3a3c42" strokeWidth="2" /></svg>
          <span className="w-[118px] text-[12px] leading-[18px] whitespace-nowrap">あなたにイチオシ<br /><span className="text-[#5c5848]">【速報】103万の壁...</span></span>
        </button>
        <button aria-label="Hidden icons" className="ml-[29px]"><Ico className="size-[14px]" sw={2.200}><path d="M2 17L12 7l10 10" /></Ico></button>
        <button aria-label="OneDrive" className="ml-[18px]"><svg viewBox="0 0 24 24" className="size-5"><path d="M5 18a5 5 0 0 1 0-10q3-6 9-3t6 6q4 1 3 7z" fill="#1c82d8" /><circle cx="17" cy="17" r="6" fill="#d92c2c" /><path d="M14.500 14.500l5 5M19.500 14.500l-5 5" stroke="#fff" strokeWidth="1.800" /></svg></button>
        <button aria-label="Microphone" className="ml-[17px]"><Ico className="size-5" color="#1d3e78"><rect x="8.500" y="1" width="7" height="14" rx="3.500" /><path d="M4.500 11q0 8 7.500 8t7.500-8M12 19v4" /></Ico></button>
        <button aria-label="Input mode" className="ml-[17px]"><Ico className="size-5"><path d="M4 22L12 2l8 20M7 15h10" /></Ico></button>
        <button aria-label="Network and sound" className="ml-4 flex items-center gap-2">
          <Ico className="size-5" sw={1.700}><path d="M2 9q10-9 20 0M5 13q7-6.500 14 0M8.500 16.500q3.500-3 7 0" /><circle cx="12" cy="20" r="1.500" fill="#111" /></Ico>
          <Ico className="size-5" sw={1.700}><path d="M2 9h4l6-5v16l-6-5H2zM16 9l6 6M22 9l-6 6" /></Ico>
          <Ico className="size-[22px]" sw={1.700}><rect x="4" y="8" width="17" height="11" rx="3" /><rect x="6" y="10" width="13" height="7" fill="#111" /><path d="M21 11h2v5h-2M5 3L3 8h4l-2 4" /></Ico>
        </button>
        <time className="ml-1 w-[76px] text-right text-[12px] leading-[18px]">9:00<br />2025/02/21</time>
        <button aria-label="Do not disturb" className="mr-[21px] ml-2"><Ico className="size-5"><path d="M4 17l2-3V8q1-5 6-5t6 5v6l2 3z" fill="#111" /><path d="M9 20q3 3 6 0M16 1h6l-6 6h6" strokeWidth="2" /><path d="M9.500 8.500h5l-5 5h5" stroke="#f5eab2" /></Ico></button>
      </div>
    </footer>
  );
}

export default function App() {
  return (
    <div className="flex h-screen flex-col overflow-hidden bg-white font-['Noto_Sans','Noto_Sans_CJK_JP',sans-serif] text-[#111] [font-feature-settings:'palt']">
      <TitleBar />
      <MenuBar />
      <div className="flex min-h-0 flex-1 border-b border-[#b0a98e]">
        <Sidebar />
        <Workspace />
      </div>
      <Taskbar />
    </div>
  );
}
